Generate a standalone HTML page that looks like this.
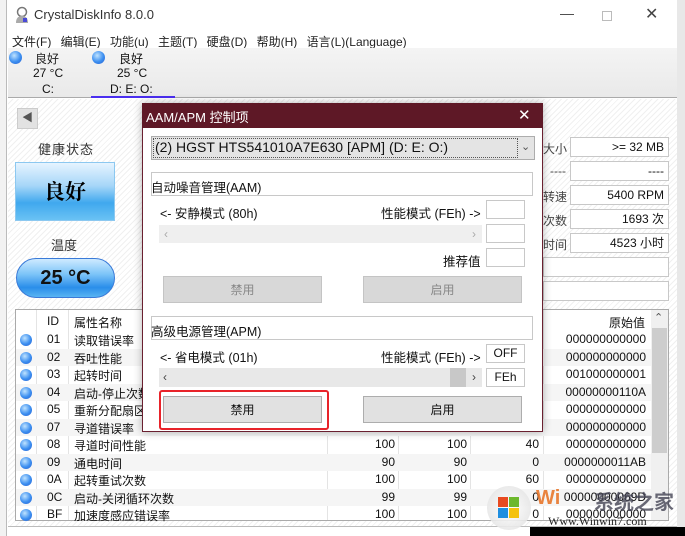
<!DOCTYPE html>
<html><head><meta charset="utf-8"><style>
*{margin:0;padding:0;box-sizing:border-box}
body{width:685px;height:536px;overflow:hidden;position:relative;background:#fff;font-family:"Liberation Sans","Noto Sans CJK SC",sans-serif;font-size:12px;color:#111}
.a{position:absolute;white-space:nowrap}
.hatch{background:repeating-linear-gradient(135deg,#fff 0 3px,#f0f0f0 3px 4px)}
.box{position:absolute;border:1px solid #c8c8c8;background:#fff}
.val{position:absolute;border:1px solid #c8c8c8;background:#fff;text-align:right;padding-right:4px;line-height:18px;font-size:12px}
.btn{position:absolute;background:#d4d4d4;border:1px solid #c4c4c4;text-align:center;line-height:26px;font-size:12px}
.dot{position:absolute;width:12px;height:12px;border-radius:50%;background:radial-gradient(circle at 40% 35%,#bfe3ff,#3b8ef0 55%,#2a5fd0)}
</style></head><body>
<div class="a" style="left:0;top:0;width:7px;height:536px;background:#f2f2f2;border-right:1px solid #bbb"></div>
<div class="a" style="left:677px;top:0;width:8px;height:536px;background:#e8e8e8"></div>
<div class="a" style="left:530px;top:527px;width:155px;height:9px;background:#000"></div>
<div class="a" style="left:7px;top:0;width:670px;height:31px;background:#fff"></div>
<svg class="a" style="left:14px;top:6px" width="16" height="18"><circle cx="8" cy="6" r="4.5" fill="none" stroke="#777" stroke-width="1.5"/><path d="M2 17 Q2 10 8 10 Q14 10 14 17Z" fill="#aaa"/><rect x="9" y="12" width="4" height="4" fill="#4a4ad8"/></svg>
<div class="a" style="left:34px;top:7px;font-size:13px;color:#333">CrystalDiskInfo 8.0.0</div>
<div class="a" style="left:560px;top:5px;font-size:14px;color:#444">—</div>
<div class="a" style="left:602px;top:11px;width:10px;height:10px;border:1px solid #bbb"></div>
<div class="a" style="left:645px;top:4px;font-size:16px;color:#444">✕</div>
<div class="a" style="left:12px;top:33px;font-size:12px;color:#222;word-spacing:6px">文件(F) 编辑(E) 功能(u) 主题(T) 硬盘(D) 帮助(H) 语言(L)(Language)</div>
<div class="a" style="left:8px;top:48px;width:669px;height:50px;background:linear-gradient(#f4f4f4,#e9e9e9);border-bottom:1px solid #aaa"></div>
<div class="dot" style="left:9px;top:51px;width:13px;height:13px"></div>
<div class="a" style="left:35px;top:50px;color:#222">良好</div>
<div class="a" style="left:33px;top:66px">27 °C</div>
<div class="a" style="left:42px;top:82px">C:</div>
<div class="dot" style="left:92px;top:51px;width:13px;height:13px"></div>
<div class="a" style="left:119px;top:50px">良好</div>
<div class="a" style="left:117px;top:66px">25 °C</div>
<div class="a" style="left:110px;top:82px">D: E: O:</div>
<div class="a" style="left:91px;top:96px;width:84px;height:2px;background:#4a2ef0"></div>
<div class="a hatch" style="left:8px;top:99px;width:669px;height:428px;border-bottom:1px solid #bbb"></div>
<div class="a" style="left:17px;top:108px;width:21px;height:21px;background:#e2e2e2;border:1px solid #ccc;color:#555;font-size:11px;text-align:center;line-height:19px">◀</div>
<div class="a" style="left:38px;top:139px;font-size:13px;color:#333;letter-spacing:1px">健康状态</div>
<div class="a" style="left:15px;top:162px;width:100px;height:59px;border:1px solid #8cc8f0;background:linear-gradient(#e6f4ff,#a6d6f8 40%,#40a8ee 70%,#6ac2f4);text-align:center;line-height:56px;font-size:21px;font-family:'Noto Serif CJK SC',serif;color:#000;font-weight:bold">良好</div>
<div class="a" style="left:51px;top:235px;font-size:13px;color:#333">温度</div>
<div class="a" style="left:16px;top:258px;width:99px;height:40px;border-radius:20px;border:1px solid #3a7ad8;background:linear-gradient(#cfeaff,#7cc4f8 40%,#2a8eea 75%,#58b4f2);text-align:center;line-height:38px;font-size:20px;font-weight:bold;color:#111">25 °C</div>
<div class="a" style="left:543px;top:140px;color:#444">大小</div>
<div class="a" style="left:550px;top:164px;color:#444">----</div>
<div class="a" style="left:543px;top:188px;color:#444">转速</div>
<div class="a" style="left:543px;top:212px;color:#444">次数</div>
<div class="a" style="left:543px;top:236px;color:#444">时间</div>
<div class="val" style="left:570px;top:137px;width:99px;height:20px">&gt;= 32 MB</div>
<div class="val" style="left:570px;top:161px;width:99px;height:20px">----</div>
<div class="val" style="left:570px;top:185px;width:99px;height:20px">5400 RPM</div>
<div class="val" style="left:570px;top:209px;width:99px;height:20px">1693 次</div>
<div class="val" style="left:570px;top:233px;width:99px;height:20px">4523 小时</div>
<div class="val" style="left:543px;top:257px;width:126px;height:20px"></div>
<div class="val" style="left:543px;top:281px;width:126px;height:20px"></div>
<div class="a" style="left:15px;top:309px;width:654px;height:212px;background:#fff;border:1px solid #aaa"></div>
<div class="a" style="left:651px;top:310px;width:17px;height:210px;background:#f0f0f0"></div>
<div class="a" style="left:652px;top:328px;width:15px;height:125px;background:#cdcdcd"></div>
<div class="a" style="left:654px;top:311px;font-size:11px;color:#555">⌃</div>
<div class="a" style="left:36px;top:310px;width:1px;height:210px;background:#e4e4e4"></div>
<div class="a" style="left:68px;top:310px;width:1px;height:210px;background:#e4e4e4"></div>
<div class="a" style="left:327px;top:310px;width:1px;height:210px;background:#e4e4e4"></div>
<div class="a" style="left:398px;top:310px;width:1px;height:210px;background:#e4e4e4"></div>
<div class="a" style="left:470px;top:310px;width:1px;height:210px;background:#e4e4e4"></div>
<div class="a" style="left:543px;top:310px;width:1px;height:210px;background:#e4e4e4"></div>
<div class="a" style="left:47px;top:314px">ID</div>
<div class="a" style="left:74px;top:314px">属性名称</div>
<div class="a" style="left:609px;top:314px">原始值</div>
<div id="rows"></div>
<script>
var r=[["01","读取错误率","","","","000000000000"],["02","吞吐性能","","","","000000000000"],["03","起转时间","","","","001000000001"],["04","启动-停止次数","","","","00000000110A"],["05","重新分配扇区","","","","000000000000"],["07","寻道错误率","","","","000000000000"],["08","寻道时间性能","100","100","40","000000000000"],["09","通电时间","90","90","0","0000000011AB"],["0A","起转重试次数","100","100","60","000000000000"],["0C","启动-关闭循环次数","99","99","0","00000000069D"],["BF","加速度感应错误率","100","100","0","000000000000"]];
var h="";r.forEach(function(x,i){var y=331+i*17.5;
if(i%2==1)h+='<div class="a" style="left:16px;top:'+y+'px;width:635px;height:17.5px;background:#f5f5f5"></div>';
h+='<div class="dot" style="left:20px;top:'+(y+3)+'px"></div><div class="a" style="left:47px;top:'+(y+1)+'px">'+x[0]+'</div><div class="a" style="left:74px;top:'+(y+1)+'px">'+x[1]+'</div>';
h+='<div class="a" style="right:290px;top:'+(y+1)+'px">'+x[2]+'</div><div class="a" style="right:218px;top:'+(y+1)+'px">'+x[3]+'</div><div class="a" style="right:146px;top:'+(y+1)+'px">'+x[4]+'</div><div class="a" style="right:39px;top:'+(y+1)+'px">'+x[5]+'</div>';});
document.getElementById("rows").innerHTML=h;
</script>
<div class="a" style="left:142px;top:103px;width:401px;height:329px;background:#fff;border:1px solid #6a2030;box-shadow:0 0 8px rgba(0,0,0,.3)"></div>
<div class="a" style="left:142px;top:103px;width:401px;height:25px;background:#5e1826"></div>
<div class="a" style="left:146px;top:107px;color:#fff;font-size:13px">AAM/APM 控制项</div>
<div class="a" style="left:518px;top:106px;color:#fff;font-size:15px">✕</div>
<div class="a" style="left:151px;top:136px;width:384px;height:24px;background:#e4e4e4;border:1px solid #adadad"></div>
<div class="a" style="left:153px;top:138px;width:365px;height:20px;border:1px dotted #555"></div>
<div class="a" style="left:155px;top:139px;font-size:14px">(2) HGST HTS541010A7E630 [APM] (D: E: O:)</div>
<div class="a" style="left:521px;top:140px;font-size:11px;color:#555">⌄</div>
<div class="box" style="left:151px;top:172px;width:382px;height:24px"></div>
<div class="a" style="left:151px;top:177px;font-size:12.5px">自动噪音管理(AAM)</div>
<div class="a" style="left:160px;top:203px;font-size:12.5px">&lt;- 安静模式 (80h)</div>
<div class="a" style="left:381px;top:203px;font-size:12.5px">性能模式 (FEh) -&gt;</div>
<div class="box" style="left:486px;top:200px;width:39px;height:19px"></div>
<div class="a" style="left:159px;top:225px;width:323px;height:18px;background:#efefef"></div>
<div class="a" style="left:164px;top:227px;color:#aaa">‹</div>
<div class="a" style="left:472px;top:227px;color:#aaa">›</div>
<div class="box" style="left:486px;top:224px;width:39px;height:19px"></div>
<div class="a" style="left:443px;top:251px;font-size:12.5px">推荐值</div>
<div class="box" style="left:486px;top:248px;width:39px;height:19px"></div>
<div class="btn" style="left:163px;top:276px;width:159px;height:27px;color:#888;background:#d8d8d8">禁用</div>
<div class="btn" style="left:363px;top:276px;width:159px;height:27px;color:#888;background:#d8d8d8">启用</div>
<div class="box" style="left:151px;top:316px;width:382px;height:24px"></div>
<div class="a" style="left:151px;top:321px;font-size:12.5px">高级电源管理(APM)</div>
<div class="a" style="left:160px;top:347px;font-size:12.5px">&lt;- 省电模式 (01h)</div>
<div class="a" style="left:381px;top:347px;font-size:12.5px">性能模式 (FEh) -&gt;</div>
<div class="box" style="left:486px;top:344px;width:39px;height:19px;text-align:center;line-height:17px">OFF</div>
<div class="a" style="left:159px;top:368px;width:323px;height:19px;background:#e8e8e8"></div>
<div class="a" style="left:450px;top:368px;width:16px;height:19px;background:#c8c8c8"></div>
<div class="a" style="left:163px;top:370px;color:#444">‹</div>
<div class="a" style="left:472px;top:370px;color:#444">›</div>
<div class="box" style="left:486px;top:368px;width:39px;height:19px;text-align:center;line-height:17px">FEh</div>
<div class="btn" style="left:163px;top:396px;width:159px;height:27px;background:#e1e1e1;border-color:#adadad">禁用</div>
<div class="btn" style="left:363px;top:396px;width:159px;height:27px;background:#e1e1e1;border-color:#adadad">启用</div>
<div class="a" style="left:159px;top:390px;width:170px;height:40px;border:2px solid #e8232a;border-radius:3px"></div>
<div class="a" style="left:487px;top:486px;width:44px;height:44px;border-radius:50%;background:radial-gradient(circle,#fff,#ddd);opacity:.9"></div>
<div class="a" style="left:498px;top:497px;width:10px;height:10px;background:#e84a20"></div>
<div class="a" style="left:509px;top:497px;width:10px;height:10px;background:#6cb82c"></div>
<div class="a" style="left:498px;top:508px;width:10px;height:10px;background:#1e8ee0"></div>
<div class="a" style="left:509px;top:508px;width:10px;height:10px;background:#f4c20d"></div>
<div class="a" style="left:536px;top:487px;font-size:20px;font-weight:bold;color:#e87020;opacity:.85">Wi</div>
<div class="a" style="left:594px;top:486px;font-size:20px;font-weight:bold;color:#445;opacity:.8">系统之家</div>
<div class="a" style="left:548px;top:514px;font-size:12px;font-family:'Liberation Serif',serif;color:#222">Www.Winwin7.com</div>
</body></html>
